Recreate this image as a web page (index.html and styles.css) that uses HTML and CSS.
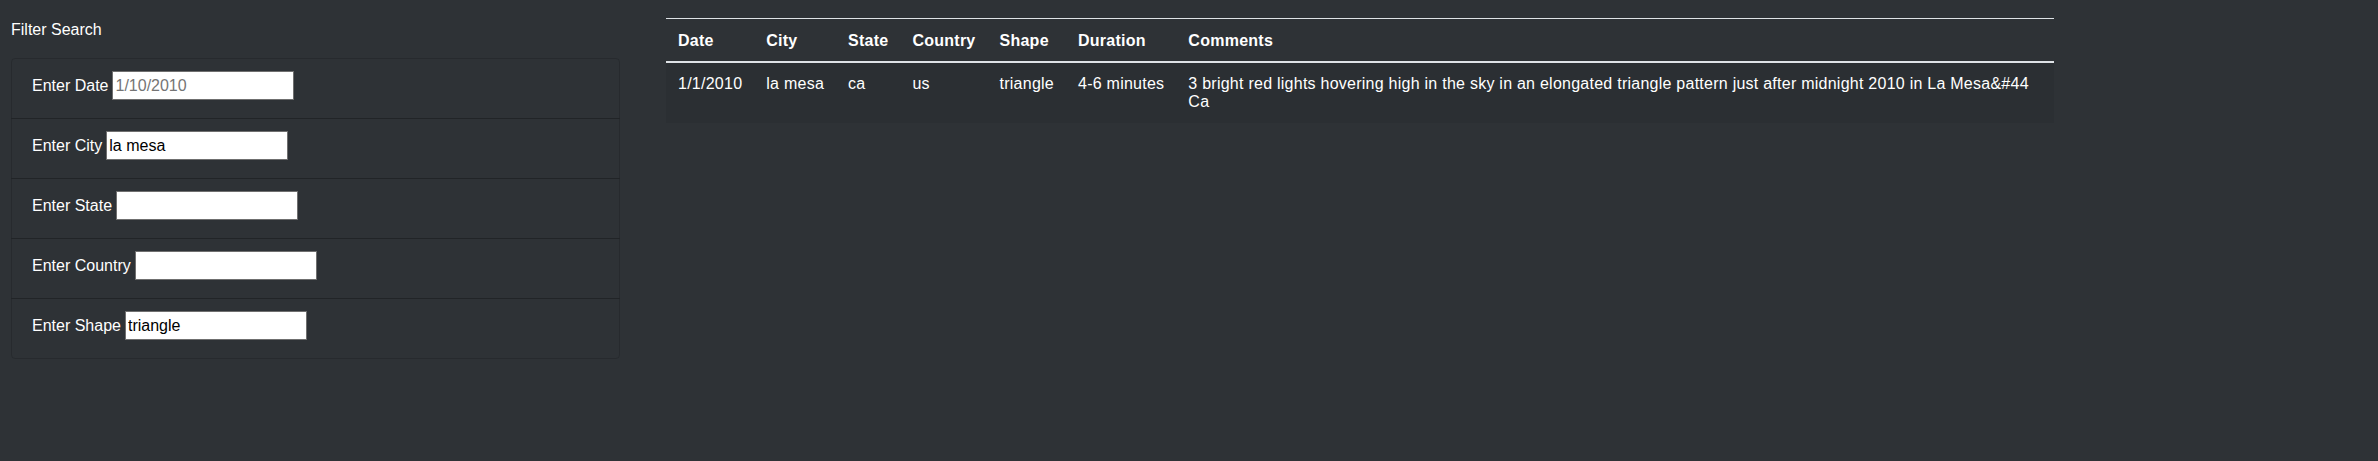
FILE: index.html
```html
<!DOCTYPE html>
<html lang="en">
<head>
<meta charset="utf-8">
<title>UFO Sightings</title>
<link rel="stylesheet" href="styles.css">
</head>
<body>
<div class="page">
  <aside class="filters">
    <div class="filters-title">Filter Search</div>
    <ul class="filter-list">
      <li class="filter-item"><label class="filter-label" for="datetime">Enter Date</label><input class="filter-input" id="datetime" type="text" placeholder="1/10/2010"></li>
      <li class="filter-item"><label class="filter-label" for="city">Enter City</label><input class="filter-input" id="city" type="text" value="la mesa"></li>
      <li class="filter-item"><label class="filter-label" for="state">Enter State</label><input class="filter-input" id="state" type="text"></li>
      <li class="filter-item"><label class="filter-label" for="country">Enter Country</label><input class="filter-input" id="country" type="text"></li>
      <li class="filter-item"><label class="filter-label" for="shape">Enter Shape</label><input class="filter-input" id="shape" type="text" value="triangle"></li>
    </ul>
  </aside>
  <main class="results">
    <table class="ufo-table">
      <thead>
        <tr>
          <th class="nowrap">Date</th>
          <th class="nowrap">City</th>
          <th class="nowrap">State</th>
          <th class="nowrap">Country</th>
          <th class="nowrap">Shape</th>
          <th class="nowrap">Duration</th>
          <th>Comments</th>
        </tr>
      </thead>
      <tbody>
        <tr class="striped">
          <td class="nowrap">1/1/2010</td>
          <td class="nowrap">la mesa</td>
          <td class="nowrap">ca</td>
          <td class="nowrap">us</td>
          <td class="nowrap">triangle</td>
          <td class="nowrap">4-6 minutes</td>
          <td class="comment">3 bright red lights hovering high in the sky in an elongated triangle pattern just after midnight 2010 in La Mesa&amp;#44 Ca</td>
        </tr>
      </tbody>
    </table>
  </main>
</div>
</body>
</html>
```

FILE: styles.css
```css
* {
  box-sizing: border-box;
}

html, body {
  margin: 0;
  padding: 0;
  background: #2e3236;
  color: #ffffff;
  font-family: "Liberation Sans", Arial, sans-serif;
  font-size: 16px;
}

body {
  min-height: 461px;
}

.page {
  display: flex;
  align-items: flex-start;
  gap: 46px;
  padding: 18px 0 0 11px;
}

.filters {
  width: 609px;
  flex: none;
}

.filters-title {
  line-height: 24px;
  margin-bottom: 16px;
}

.filter-list {
  list-style: none;
  margin: 0;
  padding: 0;
  border-radius: 4px;
}

.filter-item {
  display: flex;
  align-items: baseline;
  height: 61px;
  margin-bottom: -1px;
  padding: 12px 20px;
  border: 1px solid rgba(0, 0, 0, 0.14);
}

.filter-item:first-child {
  border-radius: 4px 4px 0 0;
}

.filter-item:last-child {
  border-radius: 0 0 4px 4px;
  margin-bottom: 0;
}

.filter-label {
  line-height: 24px;
  margin-right: 4px;
}

.filter-input {
  width: 182px;
  height: 29px;
  padding: 1px 2px;
  border: 1px solid #6f6f6f;
  border-radius: 0;
  background: #ffffff;
  color: #000000;
  font-family: "Liberation Sans", Arial, sans-serif;
  font-size: 16px;
  outline: none;
}

.filter-input::placeholder {
  color: #757575;
}

.results {
  width: 1388px;
  flex: none;
}

.ufo-table {
  width: 100%;
  border-collapse: collapse;
  letter-spacing: 0.25px;
}

.ufo-table th,
.ufo-table td {
  padding: 12px;
  text-align: left;
  vertical-align: top;
  line-height: normal;
  border-top: 1px solid #dee2e6;
}

.ufo-table th {
  font-weight: bold;
  padding-top: 13px;
  padding-bottom: 11px;
  border-bottom: 2px solid #dee2e6;
}

.ufo-table td {
  border-top: 2px solid #dee2e6;
}

.nowrap {
  white-space: nowrap;
}

.striped {
  background: rgba(0, 0, 0, 0.05);
}
```
